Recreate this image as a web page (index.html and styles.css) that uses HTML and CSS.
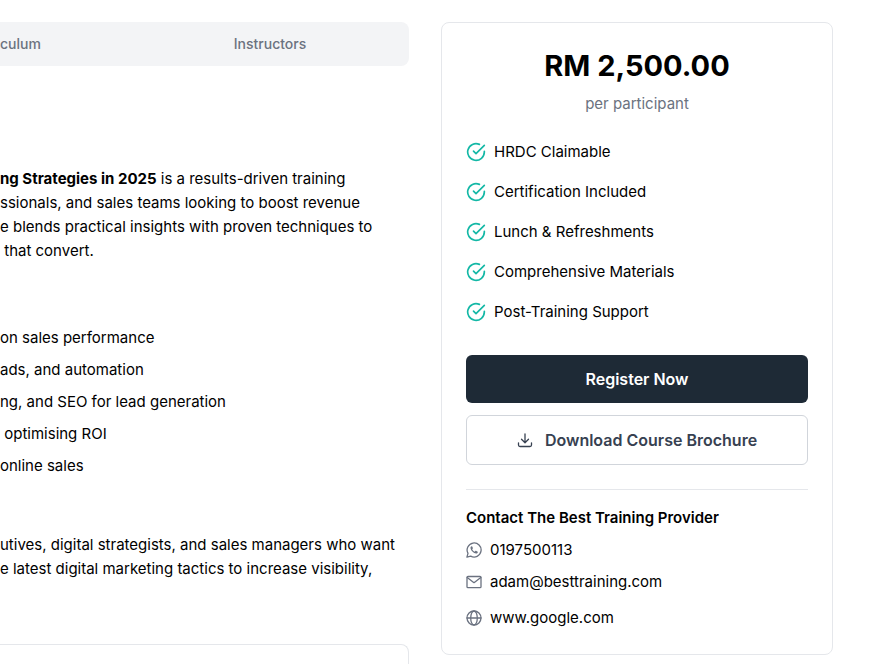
FILE: index.html
```html
<!DOCTYPE html>
<html lang="en">
<head>
<meta charset="utf-8">
<title>Course details</title>
<link rel="stylesheet" href="styles.css">
</head>
<body>
<svg class="sprite" aria-hidden="true">
  <symbol id="check" viewBox="0 0 24 24"><path d="M22 11.080V12a10 10 0 1 1-5.930-9.140"/><path d="M22 4 12 14.010l-3-3"/></symbol>
</svg>
<main class="page">
  <section class="content">
    <nav class="tabs">
      <button type="button" class="tab first">culum</button>
      <button type="button" class="tab">Instructors</button>
    </nav>
    <article class="prose">
      <p class="lines intro"><span><strong>ng Strategies in 2025</strong> is a results-driven training</span><span>ssionals, and sales teams looking to boost revenue</span><span>e blends practical insights with proven techniques to</span><span> that convert.</span></p>
      <ul class="lines outcomes">
        <li>on sales performance</li>
        <li>ads, and automation</li>
        <li>ng, and SEO for lead generation</li>
        <li> optimising ROI</li>
        <li>online sales</li>
      </ul>
      <p class="lines audience"><span>utives, digital strategists, and sales managers who want</span><span>e latest digital marketing tactics to increase visibility,</span></p>
    </article>
    <div class="panel"></div>
  </section>
  <aside class="card">
    <div class="price">RM 2,500.00</div>
    <p class="unit">per participant</p>
    <ul class="features">
      <li><svg class="check"><use href="#check"/></svg>HRDC Claimable</li>
      <li><svg class="check"><use href="#check"/></svg>Certification Included</li>
      <li><svg class="check"><use href="#check"/></svg>Lunch &amp; Refreshments</li>
      <li><svg class="check"><use href="#check"/></svg>Comprehensive Materials</li>
      <li><svg class="check"><use href="#check"/></svg>Post-Training Support</li>
    </ul>
    <div class="actions">
      <button type="button" class="btn primary">Register Now</button>
      <button type="button" class="btn outline"><svg class="icon" viewBox="0 0 16 16"><path d="M8 2v8.500M4.500 7.300 8 10.800l3.500-3.500M1.500 10.800v2.200a1.500 1.500 0 0 0 1.500 1.500h10a1.500 1.500 0 0 0 1.500-1.500v-2.200"/></svg>Download Course Brochure</button>
    </div>
    <div class="contact">
      <h2>Contact The Best Training Provider</h2>
      <a href="#"><svg class="icon" viewBox="0 0 16 16"><path d="M.9 15.100 2 11.400A7 7 0 1 1 4.700 14.100Z"/><path class="solid" d="M5.600 4.200c-.5.100-1.100.8-1.100 1.600 0 2.500 3.200 5.700 5.600 5.700.9 0 1.600-.6 1.700-1.300l-.1-.5-1.700-.9c-.3-.1-.5 0-.7.200l-.6.7C7.600 9.200 6.600 8.300 6.200 7.300l.6-.7.1-.5-.7-1.700c-.1-.2-.3-.2-.6-.2Z"/></svg>0197500113</a>
      <a href="#"><svg class="icon" viewBox="0 0 16 16"><rect x="1" y="2.500" width="14" height="11.200" rx="1"/><path d="m1.200 3.500 6.800 5.200 6.800-5.200"/></svg>adam@besttraining.com</a>
      <a href="#" class="site"><svg class="icon" viewBox="0 0 16 16"><circle cx="8" cy="8" r="7"/><ellipse cx="8" cy="8" rx="3.300" ry="7"/><path d="M1 8h14"/></svg>www.google.com</a>
    </div>
  </aside>
</main>
</body>
</html>
```
FILE: styles.css
```css
* { box-sizing: border-box; margin: 0; padding: 0; }
body {
  font: 15px/24px Inter, "Liberation Sans", sans-serif;
  color: #000;
  background: #fff;
}
ul { list-style: none; }
a { color: inherit; text-decoration: none; }
button { font: inherit; cursor: pointer; }
svg { fill: none; stroke: currentColor; flex: none; }
.sprite { display: none; }

.page {
  display: grid;
  grid-template-columns: minmax(0, 1fr) 392px;
  gap: 32px;
  align-items: start;
  padding: 22px 47px 0 0;
}

.tabs {
  display: grid;
  grid-template-columns: 1fr 2fr;
  padding: 4px 4px 4px 0;
  background: #f3f4f6;
  border-radius: 0 8px 8px 0;
}
.tab {
  height: 36px;
  border: 0;
  background: none;
  color: #6b7280;
  font-size: 14px;
  font-weight: 500;
}
.tab.first { text-align: left; }

.prose { padding-top: 101px; }
.lines { display: flex; flex-direction: column; white-space: pre; }
.outcomes { gap: 8px; margin-top: 63px; }
.audience { margin-top: 55px; }
.panel {
  height: 20px;
  margin-top: 63px;
  border: 1px solid #e5e7eb;
  border-width: 1px 1px 0 0;
  border-radius: 0 8px 0 0;
}

.card {
  padding: 24px;
  border: 1px solid #e5e7eb;
  border-radius: 8px;
}
.price { font-size: 29px; line-height: 38px; font-weight: 700; text-align: center; }
.unit { margin-top: 7px; color: #6b7280; text-align: center; }
.features { display: grid; gap: 16px; margin-top: 24px; }
.features li { display: flex; align-items: center; gap: 8px; }
.check {
  width: 20px;
  height: 20px;
  color: #14b8a6;
  stroke-width: 2;
  stroke-linecap: round;
  stroke-linejoin: round;
}

.actions { display: grid; gap: 12px; margin-top: 31px; }
.btn {
  display: flex;
  align-items: center;
  justify-content: center;
  gap: 12px;
  padding: 12px;
  border: 0;
  border-radius: 6px;
  font-size: 16px;
  font-weight: 600;
}
.primary { background: #1e2a36; color: #fff; }
.outline { background: #fff; border: 1px solid #d1d5db; color: #374151; }
.icon { width: 16px; height: 16px; stroke-width: 1.3; stroke-linecap: round; stroke-linejoin: round; }

.contact {
  display: grid;
  gap: 8px;
  margin-top: 24px;
  padding-top: 16px;
  border-top: 1px solid #e5e7eb;
}
.contact h2 { font-size: 15px; font-weight: 600; }
.contact a { display: flex; align-items: center; gap: 8px; }
.contact .icon { color: #6b7280; }
.contact .site { margin-top: 4px; }
.solid { fill: currentColor; stroke: none; }
```
